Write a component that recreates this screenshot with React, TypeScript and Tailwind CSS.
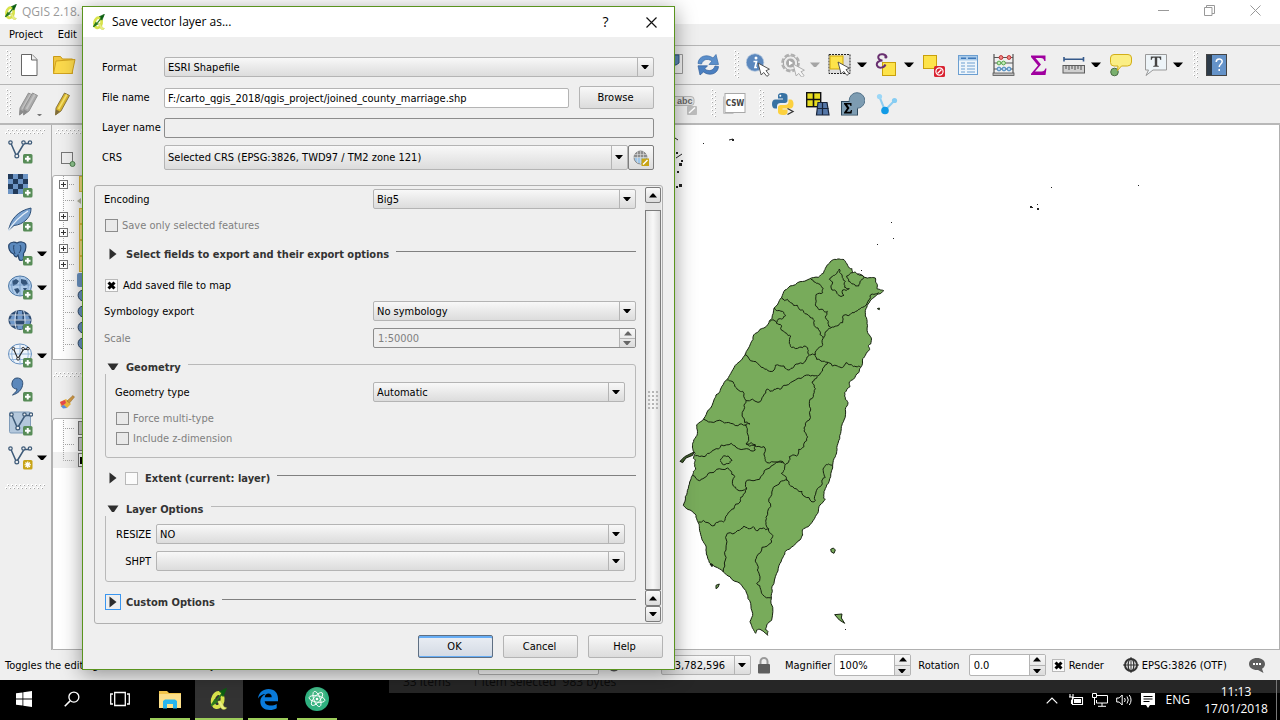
import type { ReactNode } from "react";

type Kids = { children?: ReactNode };

/* ---------- shared glyphs ---------- */

function Svg({ children, className = "h-6 w-6", box = "0 0 24 24" }: Kids & { className?: string; box?: string }) {
  return (
    <svg viewBox={box} className={`shrink-0 ${className}`} fill="none" aria-hidden="true">
      {children}
    </svg>
  );
}

function Down({ className = "text-black" }: { className?: string }) {
  return (
    <svg viewBox="0 0 10 6" className={`h-[6px] w-[10px] shrink-0 ${className}`} aria-hidden="true">
      <path d="M0 0.5h10L6 5H4z" fill="currentColor" />
    </svg>
  );
}

function SmallDown() {
  return (
    <svg viewBox="0 0 8 5" className="h-[5px] w-2" aria-hidden="true">
      <path d="M0 0h8L4.6 4h-1.2z" fill="#000" />
    </svg>
  );
}

function SmallUp({ color = "#000" }: { color?: string }) {
  return (
    <svg viewBox="0 0 8 5" className="h-[5px] w-2" aria-hidden="true">
      <path d="M0 4.5h8L4.6 0.5h-1.2z" fill={color} />
    </svg>
  );
}

function GripV({ className = "" }: { className?: string }) {
  const dots = [0, 1, 2, 3, 4, 5, 6];
  return (
    <svg viewBox="0 0 6 30" className={`h-[30px] w-[6px] shrink-0 ${className}`} aria-hidden="true">
      {dots.map((i) => (
        <g key={i}>
          <rect x="0" y={i * 4} width="2" height="2" fill="#fff" />
          <rect x="1" y={i * 4 + 1} width="1" height="1" fill="#a8a8a8" />
          <rect x="3" y={i * 4 + 2} width="2" height="2" fill="#fff" />
          <rect x="4" y={i * 4 + 3} width="1" height="1" fill="#a8a8a8" />
        </g>
      ))}
    </svg>
  );
}

function GripH({ count }: { count: number }) {
  return (
    <svg width={count * 4} height="6" className="shrink-0" aria-hidden="true">
      {Array.from({ length: count }, (_, i) => (
        <g key={i}>
          <rect x={i * 4} y="3" width="2" height="2" fill="#fff" />
          <rect x={i * 4 + 1} y="4" width="1" height="1" fill="#a8a8a8" />
          <rect x={i * 4 + 2} y="0" width="2" height="2" fill="#fff" />
          <rect x={i * 4 + 3} y="1" width="1" height="1" fill="#a8a8a8" />
        </g>
      ))}
    </svg>
  );
}

function PlusBadge() {
  return (
    <g>
      <rect x="15" y="15" width="9.5" height="9.5" rx="1.5" fill="#578c57" />
      <path d="M19.75 17v5.5M17 19.75h5.5" stroke="#fff" strokeWidth="2" />
    </g>
  );
}

function Cursor({ x, y, fill = "#fff", stroke = "#444" }: { x: number; y: number; fill?: string; stroke?: string }) {
  return (
    <path
      transform={`translate(${x} ${y})`}
      d="M0 0l3.2 12 2.5-2.6 3.2 4 2.2-1.8-3.1-3.9 3.4-1.5z"
      fill={fill}
      stroke={stroke}
      strokeWidth="0.9"
    />
  );
}

function QgisLogo({ className }: { className: string }) {
  return (
    <Svg className={className} box="0 0 16 20">
      <ellipse cx="6.800" cy="11" rx="4.400" ry="6.400" stroke="#d9e34c" strokeWidth="3.600" transform="rotate(12 7 11)" />
      <path d="M6.500 12l3.500 6.500c1.500 1.500 4 1.500 5-.5l-2.300-.8-3.200-5.700z" fill="#e9ee7d" stroke="#b9c535" strokeWidth="0.4" />
      <path d="M1 16l3.200-5 1.800 1.500zM6 11L13.500 2" fill="#2c7a1d" stroke="#2c7a1d" strokeWidth="1.6" />
      <path d="M14.8 0.3l-6.300 3 2 1 .2 2.400 1 1z" fill="#0c5f12" stroke="#0c5f12" strokeWidth="0.800" />
    </Svg>
  );
}

/* ---------- toolbar icons ---------- */

const NewFile = () => (
  <Svg>
    <path d="M4.500 1.500h10.500l5 5v16h-15.500z" fill="#fff" stroke="#666" />
    <path d="M14.500 1.500v5.500h5.500" fill="#eee" stroke="#666" />
  </Svg>
);
const Folder = () => (
  <Svg>
    <path d="M1.500 20.500v-17h7l2 2.500h10v14.500z" fill="#f0c63f" stroke="#c99a16" />
    <path d="M1.500 20.500l2.500-12.500 19-1.500-3 14z" fill="#fbd94c" stroke="#d1a31f" />
  </Svg>
);
const Refresh = () => (
  <Svg>
    <path d="M2 10.500C2.500 3 11 .5 17 5l3-3.500 2.500 10H13l3-3.500c-5-3-9-1.500-10.500 3z" fill="#5b8fcb" stroke="#3a6ba8" strokeWidth="0.7" />
    <path d="M22.500 13.500C22 21 13.500 23.500 7.500 19l-3.500 3L2 12.800h9.500l-3 3.200c5 3 9 1.500 10.500-3z" fill="#4a7fc0" stroke="#315d98" strokeWidth="0.7" />
  </Svg>
);
const Info = () => (
  <Svg>
    <circle cx="9" cy="9.500" r="8.800" fill="#5a87bd" stroke="#b7c9de" strokeWidth="0.8" />
    <circle cx="10" cy="5" r="1.500" fill="#fff" />
    <path d="M7.500 8.500h3l-1.500 6h2" stroke="#fff" strokeWidth="1.700" />
    <Cursor x={12} y={10} />
  </Svg>
);
const Gear = () => (
  <Svg>
    <circle cx="9.500" cy="10" r="8.400" stroke="#b0b0b0" strokeWidth="2" strokeDasharray="4.600 2" />
    <circle cx="9.500" cy="10" r="7.200" fill="#ececec" stroke="#a0a0a0" />
    <circle cx="9.500" cy="10" r="4.500" fill="#a9a9a9" />
    <path d="M8 7.500l4 2.500-4 2.500z" fill="#fff" />
    <Cursor x={12} y={11} fill="#f4f4f4" stroke="#a8a8a8" />
  </Svg>
);
const SelectArea = () => (
  <Svg>
    <rect x="1" y="1.500" width="21" height="19" fill="#dedede" stroke="#222" strokeDasharray="2 1" />
    <rect x="2" y="3" width="13" height="13" fill="#fde34a" stroke="#cfa70c" />
    <Cursor x={10} y={9} />
  </Svg>
);
const Epsilon = () => (
  <Svg>
    <rect x="7.500" y="9.500" width="13" height="13" fill="#fde34a" stroke="#c9a00c" />
    <path d="M11.500 4.500C11 1 5 0 3.500 3c-1 2.500 1.500 4.500 4 4.500C4 7.500 1 9.500 2 12.500c1.500 3.500 7 2.500 8.500-1" stroke="#693070" strokeWidth="2" />
    <circle cx="10.800" cy="4" r="1.500" fill="#693070" />
  </Svg>
);
const Deselect = () => (
  <Svg>
    <rect x="1.500" y="2.500" width="13" height="13" fill="#fde34a" stroke="#c9a00c" />
    <rect x="12" y="13" width="11" height="11" rx="1.500" fill="#d92231" />
    <circle cx="17.500" cy="18.500" r="3.600" stroke="#fff" strokeWidth="1.200" />
    <path d="M15.500 20.500l4-4" stroke="#fff" strokeWidth="1.200" />
  </Svg>
);
const AttrTable = () => (
  <Svg>
    <rect x="1.500" y="2.500" width="19" height="19" fill="#eef5fb" stroke="#6c9fd1" />
    <rect x="2" y="3" width="18" height="4.500" fill="#a9cbea" />
    <path d="M4 5.200h5M11 5.200h8" stroke="#3f78b8" strokeWidth="1.500" />
    <path d="M4 10h4M10 10h8M4 13h4M10 13h8M4 16h4M10 16h8M4 19h4M10 19h8" stroke="#6c9fd1" strokeWidth="1.200" />
  </Svg>
);
const Abacus = () => (
  <Svg>
    <path d="M2 1v20M21 1v20M2 4.500h19M2 10h19M2 16h19" stroke="#555" strokeWidth="1.200" />
    <rect x="1" y="20" width="21" height="2.500" fill="#bbb" stroke="#555" strokeWidth="0.800" />
    <g fill="#f28a8a" stroke="#c03434"><circle cx="9" cy="4.500" r="1.900" /><circle cx="17" cy="4.500" r="1.900" /></g>
    <g fill="#c5ebb9" stroke="#57a84e"><circle cx="7" cy="10" r="1.900" /><circle cx="11.500" cy="10" r="1.900" /></g>
    <g fill="#b3d4f3" stroke="#4485bd"><circle cx="7" cy="16" r="1.900" /><circle cx="12" cy="16" r="1.900" /><circle cx="17" cy="16" r="1.900" /></g>
  </Svg>
);
const Sigma = () => (
  <Svg>
    <path d="M4 2.500h14.500V8h-1.200c-.4-2-1.300-3-3.500-3H8.500l5.500 6.500L8 18.500h6.500c2.300 0 3.200-1 3.800-3h1.200L18.500 22H4v-1.300l7-8.200-7-8.500z" fill="#a0009f" />
  </Svg>
);
const Ruler = () => (
  <Svg>
    <path d="M2 4v4.500M21.500 4v4.500M2 6.200h19.500" stroke="#35598a" strokeWidth="1.600" />
    <rect x="1" y="12.500" width="21.500" height="7.500" fill="#cfcfcf" stroke="#5c5c5c" />
    <path d="M4 13v3M7 13v4M10 13v3M13 13v4M16 13v3M19 13v4" stroke="#444" strokeWidth="0.900" />
  </Svg>
);
const MapTip = () => (
  <Svg>
    <circle cx="5.500" cy="19" r="3.800" fill="#7ab06e" stroke="#4a6a45" />
    <path d="M5 1.500h14a3.500 3.500 0 013.500 3.500v4a4 4 0 01-4 4h-6l-4 4.500.5-4.500H5A3.500 3.500 0 011.500 9.500V5A3.500 3.500 0 015 1.500z" fill="#fbee84" stroke="#d2ae18" />
  </Svg>
);
const TextNote = () => (
  <Svg>
    <path d="M1.500 1.500h21v15.500H9L2 22.500 4.500 17h-3z" fill="#edf4f8" stroke="#999" />
    <path d="M6.800 3.500h10.400V7h-.8c-.3-1.600-.9-2.200-2.300-2.200h-.9v7.800l1.600.4v.8H9.200V13l1.600-.4V4.800h-.9C8.500 4.800 7.900 5.400 7.600 7h-.8z" fill="#444" />
  </Svg>
);
const HelpBook = () => (
  <Svg>
    <rect x="1.500" y="1.500" width="20" height="21" fill="#6593c9" stroke="#444" />
    <rect x="2" y="2" width="5" height="20" fill="#2d3b49" />
    <path d="M11.200 9c0-4 6-4 6-.5 0 2.500-3 2.500-3 5.500M14.200 16v2" stroke="#fff" strokeWidth="1.500" />
  </Svg>
);
function Pencil({ a, b, c, x = 0 }: { a: string; b: string; c: string; x?: number }) {
  return (
    <g transform={`translate(${x} 0)`}>
      <path d="M3 16L11.500 1l5 2.500L8 19 2.500 23z" fill={a} stroke={c} strokeWidth="0.900" />
      <path d="M5.500 17L13.800 2.500" stroke={b} strokeWidth="1.800" />
      <path d="M3 17.500l4 2-4.500 3.500z" fill={c} />
    </g>
  );
}
const PencilsGray = () => (
  <Svg>
    <Pencil a="#aaa" b="#c2c2c2" c="#8b8b8b" x={-1} />
    <Pencil a="#aaa" b="#c2c2c2" c="#8b8b8b" x={3} />
    <path d="M19 22h5l-2.500 2.500z" fill="#777" />
  </Svg>
);
const PencilYellow = () => (
  <Svg>
    <Pencil a="#d9b62e" b="#f5e06b" c="#806d3a" x={2} />
  </Svg>
);
const AbcLabel = () => (
  <Svg>
    <rect x="-4" y="4.500" width="23" height="9" rx="3" fill="#e2e2e2" stroke="#b5b5b5" />
    <text x="2" y="12" fontSize="9" fontWeight="700" fill="#666" fontFamily="Liberation Sans, sans-serif">abc</text>
    <rect x="12" y="14" width="10" height="9" rx="1" fill="#bdbdbd" />
    <path d="M14 21l6-5.500" stroke="#fff" strokeWidth="1.500" />
  </Svg>
);
const Csw = () => (
  <Svg>
    <path d="M.5 4.500v17h10" stroke="#c2c2c2" />
    <rect x="2" y="1.500" width="20" height="19" fill="#fff" stroke="#a8a8a8" />
    <text x="12" y="14" fontSize="8" textAnchor="middle" fontWeight="700" fill="#444" fontFamily="DejaVu Sans Condensed, DejaVu Sans, sans-serif">CSW</text>
  </Svg>
);
const Python = () => (
  <Svg>
    <path d="M11.500 1C7.500 1 7 2.500 7 4v2.500h5v1H4.500C2 7.500 1 9.500 1 12s1 4.500 3 4.500h2V14c0-2 1.500-3 3.500-3H14c1.500 0 2.500-1 2.500-2.500V4c0-2-2-3-5-3z" fill="#3872a3" />
    <circle cx="9.300" cy="3.800" r="1" fill="#fff" />
    <path d="M12 23c4 0 4.500-1.500 4.500-3v-2.500h-5v-1H19c2.500 0 3.500-2 3.500-4.500S21.500 7.500 19.500 7.500h-2V10c0 2-1.500 3-3.500 3H9.500C8 13 7 14 7 15.500V20c0 2 2 3 5 3z" fill="#fcd13f" />
    <path d="M16.500 16.500l5.500 3-5.500 3" stroke="#333" strokeWidth="1.300" />
  </Svg>
);
const Tiles = () => (
  <Svg>
    <rect x=".7" y=".7" width="14" height="14" fill="#e6dc1f" stroke="#111" strokeWidth="1.400" />
    <path d="M7.500 1v13M1 7.500h13" stroke="#111" strokeWidth="1.600" />
    <path d="M12 10.500h9l2 12.500H10.500z" fill="#5577a8" stroke="#18243a" strokeWidth="1.200" />
    <path d="M16.500 10.500V23M11 16.500h11.500" stroke="#18243a" strokeWidth="1.200" />
  </Svg>
);
const SigmaBubble = () => (
  <Svg>
    <rect x=".5" y="9.500" width="16" height="13.500" fill="#7d9cb2" stroke="#2f485c" />
    <circle cx="16" cy="8.500" r="7.800" fill="#7d9cb2" stroke="#54738a" />
    <rect x="1" y="10" width="15" height="12.500" fill="#7d9cb2" />
    <path d="M3 11h7.500v3h-1l-.6-1.400H6L8.500 16 5.800 19.800h3.400l.8-1.800h1l-.4 3.500H3v-1L6 16.200 3 12z" fill="#000" />
  </Svg>
);
const BlueNodes = () => (
  <Svg>
    <path d="M3.500 5L9 18.500 18 9" stroke="#8fcdf0" strokeWidth="2" />
    <circle cx="3.500" cy="4.500" r="2.600" fill="#9bd7f7" />
    <circle cx="18.500" cy="8.500" r="2.600" fill="#86cdf3" />
    <circle cx="9" cy="18.500" r="3.800" fill="#129be6" />
  </Svg>
);
const PanelPeek = () => (
  <Svg>
    <path d="M0 1.500h7.500v19H0" fill="#f2f2f2" stroke="#999" />
    <path d="M-1 2h5v8l-3 2h-2z" fill="#5d87b8" stroke="#2f567f" />
  </Svg>
);

/* ---------- left tool column icons ---------- */

const VNodes = ({ dark = "#3d5a78" }: { dark?: string }) => (
  <g stroke={dark} strokeWidth="1.500">
    <path d="M3 4.500L8.500 17 16 4.500h5" />
    <g fill="#efefef" strokeWidth="1.200">
      <circle cx="2.500" cy="3.500" r="1.700" /><circle cx="8.800" cy="17" r="1.900" /><circle cx="15.500" cy="3.500" r="1.700" /><circle cx="22" cy="3.500" r="1.700" />
    </g>
  </g>
);
const AddVector = () => <Svg className="h-[25px] w-[25px]" box="0 0 25 25"><VNodes /><PlusBadge /></Svg>;
const AddRaster = () => (
  <Svg className="h-[25px] w-[25px]" box="0 0 25 25">
    <rect y="1" width="20" height="20" fill="#6c94c4" />
    <path d="M0 1h5v5H0zM10 1h5v5h-5zM5 6h5v5H5zM15 6h5v5h-5zM0 11h5v5H0zM10 11h5v5h-5zM5 16h5v5H5z" fill="#213a5a" />
    <PlusBadge />
  </Svg>
);
const AddSpatialite = () => (
  <Svg className="h-[25px] w-[25px]" box="0 0 25 25">
    <path d="M.5 23.500C2.500 13 9 4 23 1c0 6-2 9-5 12-3 3-7 5-12 5.500z" fill="#7ba3d0" stroke="#2c4f78" />
    <path d="M0 24C6 15 12 9 20 4" stroke="#e4eef8" strokeWidth="1.300" />
    <PlusBadge />
  </Svg>
);
const AddPostgis = () => (
  <Svg className="h-[25px] w-[25px]" box="0 0 25 25">
    <path d="M1 3.500C3 .5 7 1 9 2c3-1.500 7-1.500 8.500 1 1 4 0 7-2 9.500V18c-1 2-4 2-4.500 0l-1-4-1.500 2c-2 0-2.500-2-3-3C2 12 0 7 1 3.500z" fill="#5b89bd" stroke="#26456c" strokeWidth="1.200" />
    <path d="M6 4c-1 3 0 6 1 9M12 4c1.500 2 1 6-1 8" stroke="#26456c" />
    <PlusBadge />
  </Svg>
);
const AddWms = () => (
  <Svg className="h-[25px] w-[25px]" box="0 0 25 25">
    <ellipse cx="12" cy="11" rx="11.500" ry="10" fill="#aecbea" stroke="#4f79a6" />
    <path d="M4 6l4-2 3 2-2 3-4 2zM13 4l5 1 2 4-4 2-3-3zM6 14l4-1 2 3-3 3zM15 13l4 0-2 4z" fill="#34557b" />
    <path d="M2 10h20M12 1v20M6 3c-3 5-3 11 0 16M18 3c3 5 3 11 0 16" stroke="#6a93c0" strokeWidth="0.700" />
    <PlusBadge />
  </Svg>
);
const AddWcs = () => (
  <Svg className="h-[25px] w-[25px]" box="0 0 25 25">
    <ellipse cx="12" cy="11" rx="11.500" ry="10" fill="#2c4a70" />
    <path d="M9.500 6.500h5v4h-5zM1.500 11.500H7v4H3zM17 11.500h5.500l-1 4H17zM9.500 16.500h5V20h-5zM4 6.500h4v4H2zM16 6.500h4l2 4h-6zM10 2h4v3.500h-4z" fill="#6f98c9" />
    <path d="M2 6h20M1 11h22M2 16h20M8.500 1.500c-2 6-2 13 0 19M15.500 1.500c2 6 2 13 0 19" stroke="#dfe9f4" strokeWidth="0.900" />
    <PlusBadge />
  </Svg>
);
const AddWfs = () => (
  <Svg className="h-[25px] w-[25px]" box="0 0 25 25">
    <ellipse cx="12" cy="11" rx="11.500" ry="10" fill="#edf4fb" stroke="#6690bf" />
    <path d="M1 11h22M12 1v20M6 3c-3 5-3 11 0 16M18 3c3 5 3 11 0 16M3 5.500h18M3 16.500h18" stroke="#8eb1d8" strokeWidth="0.900" />
    <g transform="translate(3.500 3) scale(.75)"><VNodes dark="#222" /></g>
    <PlusBadge />
  </Svg>
);
const AddCsv = () => (
  <Svg className="h-[25px] w-[25px]" box="0 0 25 25">
    <path d="M9 1c4.500 0 6.500 3 5.500 7.500C13.500 13 10 16.500 4.500 18c3-2.500 4.500-4.500 4.500-6C5 12 3.500 9 4 6c.4-3 2.500-5 5-5z" fill="#5c88bb" stroke="#2c4c72" />
    <PlusBadge />
  </Svg>
);
const AddVirtual = () => (
  <Svg className="h-[25px] w-[25px]" box="0 0 25 25">
    <rect x="1.500" y="1" width="21" height="21" rx="1.500" fill="#b4c8dc" stroke="#7f9bb8" />
    <g transform="translate(1 0)"><VNodes /></g>
    <PlusBadge />
  </Svg>
);
const NewVector = () => (
  <Svg className="h-[25px] w-[25px]" box="0 0 25 25">
    <VNodes />
    <rect x="15" y="15" width="9.500" height="9.500" rx="1.500" fill="#c8a416" />
    <path d="M19.750 16.500v6.500M16.500 19.750h6.500M17.500 17.500l4.500 4.500M22 17.500l-4.500 4.500" stroke="#fff" strokeWidth="1.200" />
  </Svg>
);

/* ---------- controls ---------- */

const face = "rounded-[2px] border border-[#b4b4b4] bg-linear-to-b from-[#f8f8f8] to-[#dcdcdc]";

function Combo({ id, value, className = "h-5 w-full" }: { id: string; value: string; className?: string }) {
  return (
    <div className={`relative flex ${className}`}>
      <select id={id} aria-label={id} defaultValue={value} className={`h-full w-full appearance-none pt-px pr-5 pl-[3px] leading-[14px] text-black outline-none ${face}`}>
        <option value={value}>{value}</option>
      </select>
      <span className="pointer-events-none absolute inset-y-px right-px flex w-4 items-center justify-center border-l border-[#b4b4b4] pr-px">
        <SmallDown />
      </span>
    </div>
  );
}

function Spin({ id, value, disabled, className }: { id: string; value: string; disabled?: boolean; className: string }) {
  const ink = disabled ? "#666" : "#000";
  const box = disabled ? "border-[#8c8c8c] bg-[#efefef] text-[#808080]" : "border-[#b4b4b4] bg-white text-black";
  return (
    <div className={`flex overflow-hidden rounded-[2px] border ${box} ${className}`}>
      <input id={id} defaultValue={value} disabled={disabled} className="min-w-0 flex-1 bg-transparent pt-px pl-1 outline-none" />
      <div className="flex w-4 flex-col border-l border-[#b4b4b4] bg-linear-to-b from-[#f8f8f8] to-[#dcdcdc]">
        <button aria-label={`${id} up`} disabled={disabled} className="flex flex-1 items-center justify-center border-b border-[#b4b4b4]">
          <SmallUp color={ink} />
        </button>
        <button aria-label={`${id} down`} disabled={disabled} className="flex flex-1 rotate-180 items-center justify-center">
          <SmallUp color={ink} />
        </button>
      </div>
    </div>
  );
}

function Check({ label, checked, disabled, gap = "gap-1" }: { label?: string; checked?: boolean; disabled?: boolean; gap?: string }) {
  const edge = disabled ? "border-[#8c8c8c] bg-[#e9e9e9]" : "border-[#b9b9b9] bg-[#fbfbfb]";
  return (
    <label className={`flex h-[14px] items-center ${gap} ${disabled ? "text-[#808080]" : "text-black"}`}>
      <span className="relative flex h-[13px] w-[13px] shrink-0">
        <input type="checkbox" aria-label={label ?? "Extent"} defaultChecked={checked} disabled={disabled} className={`h-full w-full appearance-none border ${edge}`} />
        {checked && (
          <svg viewBox="0 0 13 13" className="pointer-events-none absolute inset-0 h-full w-full" aria-hidden="true">
            <path d="M3.500 3.500l6 6M9.500 3.500l-6 6" stroke="#000" strokeWidth="3" />
          </svg>
        )}
      </span>
      {label && <span className="pt-px">{label}</span>}
    </label>
  );
}

function Push({ children, primary }: Kids & { primary?: boolean }) {
  const look = primary
    ? "rounded-[2px] border border-[#5f6f82] bg-linear-to-b from-[#eaeef4] to-[#d3dae4] shadow-[inset_0_2px_0_#66adf5,inset_0_-1px_0_#66adf5]"
    : face;
  return <button className={`h-[23px] w-[75px] shrink-0 pt-px pr-[2px] leading-[14px] ${look}`}>{children}</button>;
}

function TriRight() {
  return <svg viewBox="0 0 8 12" className="h-3 w-2" aria-hidden="true"><path d="M.5.500L7.500 6l-7 5.500z" fill="#2e2e2e" /></svg>;
}
function TriDown() {
  return <svg viewBox="0 0 12 8" className="h-2 w-3" aria-hidden="true"><path d="M.500.5h11L7 7H5z" fill="#2e2e2e" /></svg>;
}

function Collapsed({ title, check, focus, className }: { title: string; check?: boolean; focus?: boolean; className: string }) {
  return (
    <div className={`flex h-4 items-center ${className}`}>
      <button aria-label={`Expand ${title}`} className={`flex h-4 w-4 items-center justify-center border ${focus ? "border-[#3a96f0]" : "border-transparent"}`}>
        <TriRight />
      </button>
      {check && <span className="ml-1 flex"><Check /></span>}
      <h3 className={`pt-[2px] font-bold text-[#333] ${check ? "ml-[7px]" : "ml-[5px]"}`}>{title}</h3>
      <span className="mb-[6px] ml-[7px] h-px flex-1 bg-[#808080]" />
    </div>
  );
}

function Group({ title, className, children }: Kids & { title: string; className: string }) {
  return (
    <fieldset className={`min-w-0 rounded-[3px] border border-[#b9b9b9] px-[10px] ${className}`}>
      <legend className="-ml-[11px] flex h-5 items-center bg-[#efefef] pt-[6px] pr-[7px] font-bold text-[#333]">
        <button aria-label={`Collapse ${title}`} className="mr-[5px] flex h-[14px] w-4 items-center justify-center">
          <TriDown />
        </button>
        <span className="pt-px">{title}</span>
      </legend>
      {children}
    </fieldset>
  );
}

/* ---------- dialog ---------- */

function ScrollBar() {
  const btn = "flex h-4 items-center justify-center rounded-[2px] border border-[#7c7c7c] bg-linear-to-b from-[#fafafa] to-[#dcdcdc]";
  return (
    <div className="flex w-4 flex-col bg-[#e4e4e4]">
      <button aria-label="Scroll up" className={btn}><SmallUp /></button>
      <div className="mt-[7px] flex flex-1 flex-col items-center justify-center border border-[#7c7c7c] bg-linear-to-r from-[#e4e4e4] via-[#f8f8f8] to-[#dcdcdc]">
        <svg width="11" height="19" aria-hidden="true">
          {[0, 4, 8, 12, 16].map((y) => [0, 4, 8].map((x) => <rect key={`${x}-${y}`} x={x} y={y} width="2" height="2" fill="#b5b5b5" />))}
        </svg>
      </div>
      <button aria-label="Page up" className={btn}><SmallUp /></button>
      <button aria-label="Scroll down" className={btn}><SmallDown /></button>
    </div>
  );
}

function Dialog() {
  return (
    <section role="dialog" aria-label="Save vector layer as" className="absolute top-[6px] left-[82px] z-20 flex w-[593px] flex-col border border-[#5a941e] bg-[#efefef] shadow-[0_4px_20px_rgba(0,0,0,0.4)]">
      <header className="flex h-[30px] items-center bg-white pl-[9px] font-['Open_Sans','Noto_Sans',sans-serif] text-[12px]">
        <QgisLogo className="h-4 w-[14px]" />
        <h2 className="ml-[6px] flex-1">Save vector layer as...</h2>
        <button aria-label="Help" className="w-[45px] text-[14px]">?</button>
        <button aria-label="Close" className="flex w-[46px] justify-center">
          <svg viewBox="0 0 11 11" className="h-[11px] w-[11px]" aria-hidden="true"><path d="M.5.500l10 10M10.500.500l-10 10" stroke="#111" strokeWidth="1.200" /></svg>
        </button>
      </header>

      <div className="grid grid-cols-[62px_1fr] items-center gap-y-[7px] pt-5 pr-5 pl-[19px]">
        <label htmlFor="Format" className="pt-px">Format</label>
        <Combo id="Format" value="ESRI Shapefile" />
        <label htmlFor="file" className="pt-[2px]">File name</label>
        <div className="flex items-center gap-[10px] pt-[2px]">
          <input id="file" defaultValue="F:/carto_qgis_2018/qgis_project/joined_county_marriage.shp" className="h-5 min-w-0 flex-1 rounded-[2px] border border-[#b4b4b4] bg-white pt-px pl-[3px] outline-none" />
          <Push>Browse</Push>
        </div>
        <label htmlFor="layer" className="pt-[2px]">Layer name</label>
        <input id="layer" disabled className="mt-[2px] h-5 w-full rounded-[2px] border border-[#8c8c8c] bg-[#efefef]" />
        <label htmlFor="CRS" className="pt-px">CRS</label>
        <div className="flex">
          <Combo id="CRS" value="Selected CRS (EPSG:3826, TWD97 / TM2 zone 121)" className="h-[25px] flex-1" />
          <button aria-label="Select CRS" className="flex h-[25px] w-[26px] items-center justify-center rounded-[2px] border border-[#7c7c7c] bg-linear-to-b from-[#fafafa] to-[#dcdcdc]">
            <Svg className="h-4 w-4" box="0 0 16 16">
              <circle cx="7.500" cy="7.500" r="6.500" fill="#9fc6e8" stroke="#8d8d8d" />
              <path d="M1 7.500A6.500 6.500 0 0114 7.500z" fill="#8d8d8d" />
              <path d="M1 4.500h13M0 7.500h15M4.500 1v12M7.500 1v13M10.500 1v12" stroke="#ddd" strokeWidth="0.600" />
              <rect x="8.500" y="8.500" width="7.500" height="7.500" fill="#c8a416" />
              <path d="M10 14.500l4.500-4.500" stroke="#fff" strokeWidth="1.500" />
            </Svg>
          </button>
        </div>
      </div>

      <div className="mx-[11px] mt-[15px] flex rounded-[3px] border border-[#b0b0b0] py-px pr-px">
        <div className="flex min-w-0 flex-1 flex-col pt-[2px] pr-[9px] pb-3 pl-[10px]">
          <div className="grid grid-cols-[268px_1fr] items-center">
            <label htmlFor="Encoding" className="-ml-px pt-px">Encoding</label>
            <Combo id="Encoding" value="Big5" />
          </div>
          <div className="mt-[9px]"><Check label="Save only selected features" disabled /></div>
          <Collapsed title="Select fields to export and their export options" className="mt-[14px]" />
          <div className="mt-4"><Check label="Add saved file to map" checked gap="gap-[5px]" /></div>
          <div className="mt-[9px] grid grid-cols-[268px_1fr] items-center gap-y-[7px]">
            <label htmlFor="Symbology" className="-ml-px pt-px">Symbology export</label>
            <Combo id="Symbology" value="No symbology" />
            <label htmlFor="Scale" className="-ml-px pt-px text-[#808080]">Scale</label>
            <Spin id="Scale" value="1:50000" disabled className="h-5 w-full" />
          </div>
          <Group title="Geometry" className="mt-[6px] pb-3">
            <div className="mt-2 grid grid-cols-[257px_1fr] items-center">
              <label htmlFor="Geometry" className="-ml-px pt-px">Geometry type</label>
              <Combo id="Geometry" value="Automatic" />
            </div>
            <div className="mt-[9px] flex flex-col gap-[6px]">
              <Check label="Force multi-type" disabled />
              <Check label="Include z-dimension" disabled />
            </div>
          </Group>
          <Collapsed title="Extent (current: layer)" check className="mt-3" />
          <Group title="Layer Options" className="mt-[10px] pb-[10px]">
            <div className="mt-2 grid grid-cols-[35px_1fr] items-center gap-x-[5px] gap-y-[7px] text-right">
              <label htmlFor="RESIZE" className="pt-px">RESIZE</label>
              <Combo id="RESIZE" value="NO" />
              <label htmlFor="SHPT" className="pt-px">SHPT</label>
              <Combo id="SHPT" value="" />
            </div>
          </Group>
          <Collapsed title="Custom Options" focus className="mt-3" />
        </div>
        <ScrollBar />
      </div>

      <footer className="flex justify-end gap-[10px] px-[11px] pt-[11px] pb-[11px]">
        <Push primary>OK</Push>
        <Push>Cancel</Push>
        <Push>Help</Push>
      </footer>
    </section>
  );
}

/* ---------- map ---------- */

const coast =
  "M598 57L612 59 618 68 628 84 636 86 638 98 646 96 652 102 664 106 674 112 690 113 706 114 707 126 710 130 711 146 722 150 731 152 716 162 702 172 688 188 678 206 676 228 681 250 683 278 693 292 692 312 684 318 689 328 676 346 668 356 662 382 656 398 640 418 628 426 630 440 614 458 616 478 624 488 616 508 612 540 604 560 602 580 594 610 590 635 586 650 578 675 572 710 560 735 552 755 551 775 556 778 540 795 535 815 524 835 505 860 487 870 488 885 480 900 460 918 436 934 430 950 420 970 410 1000 396 1040 395 1060 393 1090 395 1140 380 1155 376 1168 384 1175 383 1186 372 1176 360 1168 350 1170 347 1180 340 1168 336 1160 330 1145 338 1120 332 1090 320 1060 300 1030 270 1010 250 996 225 980 208 968 199 942 198 918 190 905 182 884 178 860 174 846 168 826 150 810 130 796 136 770 145 745 152 720 158 705 160 695 167 688 163 670 166 660 160 655 165 640 158 625 158 610 168 590 172 570 170 555 192 535 205 510 222 480 228 465 240 455 245 440 262 418 275 395 290 372 316 344 332 310 341 285 360 268 375 262 388 243 396 235 402 205 418 182 425 172 435 150 450 138 480 125 508 117 535 112 550 100 556 85 568 70 580 59 598 57";

const borders = [
  "M513 118L530 130 542 136 550 146 548 158 528 164 527 190 534 206 546 208 552 214 562 214 556 232 564 250 573 263",
  "M424 173L434 182 442 178 452 188 472 196 478 208 490 212 505 226 518 234 522 252 534 264 540 284 548 292 555 286 564 268 573 263",
  "M573 263L590 258 608 248 610 226 636 218 656 208 668 202 684 184 690 168 706 162 716 158",
  "M402 205L412 212 432 218 436 228 428 236 414 238 410 250 402 240 390 244",
  "M410 250L424 256 422 266 440 280 452 288 448 310 454 322 478 322 496 318 505 332 508 345 526 343 538 322 548 314 552 292",
  "M314 343L340 364 364 382 384 392 402 390 406 376 432 378 440 388 458 384 474 372 498 360 506 346",
  "M526 343L530 358 548 364 566 368 592 378 608 382 618 368 634 374 648 380 662 382",
  "M564 366L548 386 532 408 512 408 488 412 466 420 438 436 420 448 402 448 390 454 380 448 370 468 354 487 318 482",
  "M262 420L276 424 284 438 296 450 308 454 318 482 318 488 312 508 314 548 330 552 316 556 322 566 318 612 342 616",
  "M190 537L212 546 248 545 272 550 300 552 320 556",
  "M532 410L516 426 526 446 520 470 508 490 512 510 508 540 492 564 498 580 500 602 492 620 476 628 470 648 448 650 446 666 436 674",
  "M166 647L192 650 208 640 222 630 244 615 274 610 288 622 320 626 346 630 346 614 320 612",
  "M342 616L372 620 374 650 376 662 402 666 426 664 436 674",
  "M436 674L434 688 424 700 438 710 444 722 452 738 474 752 486 754 492 768 516 786 526 782 528 756 540 740 546 720 556 712 550 696 554 680 566 672 576 676",
  "M240 660L248 650 264 648 276 662 268 670 250 674 240 662",
  "M158 706L178 722 192 714 210 698 230 688 262 684 272 692 284 710 280 738 290 748 320 744 318 724 342 722 368 704 384 686 404 672 428 668",
  "M320 744L314 760 302 772 300 786 282 806 262 824 250 846 238 844 224 856 204 848 176 846",
  "M442 720L420 726 400 742 392 770 392 800 378 832 378 848 386 866 392 880 398 890 394 908 366 922 350 950 350 970 352 990 360 1010 350 1030 362 1048 368 1064 394 1074",
  "M250 996L256 960 258 930 262 880 292 872 312 858 324 866 340 860 354 872 370 864 386 868",
  "M568 118L576 110 586 104 598 87 606 104 610 120 616 124 614 142 628 146 608 150 612 166 600 168 590 156 576 150 578 126 568 118",
  "M638 98L620 108 626 124 640 132 656 138 662 122 672 112 652 102",
];

/* Splits each segment twice and nudges the new points sideways, for a natural shoreline. */
function roughen(d: string, amount: number) {
  let seed = 7;
  const rand = () => {
    seed = (seed * 1103515245 + 12345) % 2147483648;
    return seed / 2147483648 - 0.5;
  };
  const nums = (d.match(/\d+/g) ?? []).map(Number);
  let pts: [number, number][] = [];
  for (let i = 0; i < nums.length; i += 2) pts.push([nums[i], nums[i + 1]]);
  for (let pass = 0; pass < 2; pass++) {
    const next: [number, number][] = [pts[0]];
    for (let i = 1; i < pts.length; i++) {
      const [x0, y0] = pts[i - 1];
      const [x1, y1] = pts[i];
      const k = rand() * amount;
      next.push([(x0 + x1) / 2 - (y1 - y0) * k, (y0 + y1) / 2 + (x1 - x0) * k], [x1, y1]);
    }
    pts = next;
  }
  return "M" + pts.map(([x, y]) => `${x.toFixed(1)} ${y.toFixed(1)}`).join("L");
}

const coastPath = roughen(coast, 0.22);
const borderPaths = borders.map((d) => roughen(d, 0.4));

const islets: [number, number, number][] = [
  [732, 139, 2], [703, 143, 1], [676, 152, 2], [681, 160, 2], [679, 163, 3], [677, 171, 2], [679, 184, 3], [676, 186, 2],
  [1051, 187, 1], [1138, 185, 1], [1030, 206, 2], [1032, 207, 1], [1037, 204, 1], [1037, 208, 2], [891, 222, 1], [893, 238, 1], [877, 244, 1], [861, 270, 1],
  [845, 629, 1],
];

function TaiwanMap() {
  return (
    <svg viewBox="660 125 619 523" width="619" height="523" className="shrink-0" role="img" aria-label="Taiwan county map">
      <g transform="translate(640 240) scale(0.33333)" stroke="#16200f" strokeWidth="3" strokeLinejoin="round">
        <path d={coastPath} fill="#78ab5b" />
        {borderPaths.map((d) => <path key={d} d={d} fill="none" />)}
        <path d="M120 664l14-14 28-14-4 10-20 8-10 14z" fill="#44632f" />
        <path d="M572 928l8-4 6 6-4 10-8-4zM228 1036l10-4-4 10-6 4zM584 1124l22-2-2 12 10 16-16-10zM712 206l6-2 0 5z" fill="#78ab5b" />
        <path d="M210 972l8 2-2 6z" fill="#111" />
      </g>
      {islets.map(([x, y, s]) => <rect key={`${x}-${y}`} x={x} y={y} width={s} height={s} fill="#222" />)}
      <path d="M675 138l3 2M676 158l6-4M729 140l4-1" stroke="#222" />
    </svg>
  );
}

/* ---------- main window ---------- */

function Tool({ label, children, drop, faded }: Kids & { label: string; drop?: boolean; faded?: boolean }) {
  return (
    <button aria-label={label} className={`flex shrink-0 items-center gap-[5px] ${drop ? "w-9" : "w-6"}`}>
      {children}
      {drop && <Down className={faded ? "text-[#a5a5a5]" : "text-black"} />}
    </button>
  );
}

function SideTool({ label, drop, children }: Kids & { label: string; drop?: boolean }) {
  return (
    <button aria-label={label} className="flex h-[25px] w-full items-center gap-1">
      {children}
      {drop && <Down />}
    </button>
  );
}

type Node = { plus: boolean; tag: string };
const tree: Node[] = [
  { plus: true, tag: "folder" }, { plus: false, tag: "star" }, { plus: true, tag: "folder" }, { plus: true, tag: "folder" },
  { plus: true, tag: "folder" }, { plus: true, tag: "folder" }, { plus: false, tag: "blue" }, { plus: false, tag: "navy" },
  { plus: false, tag: "navy" }, { plus: false, tag: "navy" }, { plus: false, tag: "navy" },
];

function TreeRow({ plus, tag }: Node) {
  return (
    <li className="flex h-4 items-center">
      <svg width="30" height="16" aria-hidden="true">
        <path d="M10.500 0v16M12 8.500h9" stroke="#a5a5a5" strokeDasharray="1 1" />
        {plus && (
          <g stroke="#777">
            <rect x="6.500" y="4.500" width="8" height="8" fill="#fff" />
            <path d="M8 8.500h5M10.500 6v5" stroke="#333" />
          </g>
        )}
        {tag === "folder" && <rect x="26.500" y=".5" width="6" height="15" fill="#f7dd83" stroke="#e0b93e" />}
        {tag === "star" && <path d="M24 9l4-3v6z" fill="#b5b5a0" />}
        {tag === "blue" && <rect x="24" y="1" width="8" height="14" rx="2" fill="#6c94c4" />}
        {tag === "navy" && <path d="M30 2c-7 1-6 10 0 11z" fill="#6c94c4" stroke="#2d4868" />}
      </svg>
    </li>
  );
}

function MainWindow() {
  return (
    <div className="relative z-10 flex min-h-0 flex-1 flex-col bg-[#efefef]">
      <header className="flex h-6 shrink-0 items-center bg-white pr-[2px] pl-1 font-['Open_Sans','Noto_Sans',sans-serif] text-[12px] text-[#999]">
        <QgisLogo className="h-4 w-[14px]" />
        <h1 className="ml-1 flex-1">QGIS 2.18.1</h1>
        <div className="flex items-center">
          {["M0 5.500h11", "M.500 2.500h7.500v8H.500zM2.500 2.500V.500h8v8H8", "M.500.500l10 10M10.500.500l-10 10"].map((d) => (
            <button key={d} aria-label="Window control" className="flex w-[46px] justify-center">
              <svg viewBox="0 0 11 11" className="mb-1 h-[11px] w-[11px]" fill="none" stroke="#999" aria-hidden="true"><path d={d} /></svg>
            </button>
          ))}
        </div>
      </header>
      <nav className="flex h-[22px] shrink-0 items-center gap-[15px] border-b border-[#b5b5b5] pt-px pl-[9px]">
        <button>Project</button>
        <button>Edit</button>
      </nav>

      <div className="flex h-[39px] shrink-0 items-center border-b border-[#b5b5b5]">
        <div className="flex w-[675px] shrink-0 items-center pl-[6px]">
          <GripV />
          <span className="ml-[5px] flex gap-[11px]">
            <Tool label="New"><NewFile /></Tool>
            <Tool label="Open"><Folder /></Tool>
          </span>
        </div>
        <div className="flex shrink-0 items-center gap-[11px]">
          <span className="flex w-[10px] overflow-hidden"><PanelPeek /></span>
          <Tool label="Refresh"><Refresh /></Tool>
          <GripV className="ml-[3px]" />
        </div>
        <div className="ml-[6px] flex shrink-0 items-center gap-[11px]">
          <Tool label="Identify"><Info /></Tool>
          <Tool label="Run action" drop faded><Gear /></Tool>
          <Tool label="Select" drop><SelectArea /></Tool>
          <Tool label="Select by expression" drop><Epsilon /></Tool>
          <Tool label="Deselect"><Deselect /></Tool>
          <Tool label="Attribute table"><AttrTable /></Tool>
          <Tool label="Field calculator"><Abacus /></Tool>
          <Tool label="Statistics"><Sigma /></Tool>
          <Tool label="Measure" drop><Ruler /></Tool>
          <Tool label="Map tips"><MapTip /></Tool>
          <Tool label="Annotation" drop><TextNote /></Tool>
        </div>
        <GripV className="mr-[6px] ml-[13px]" />
        <Tool label="Help contents"><HelpBook /></Tool>
      </div>

      <div className="flex h-[38px] shrink-0 items-center">
        <div className="flex w-[675px] shrink-0 items-center pl-[6px]">
          <GripV />
          <span className="ml-[6px] flex gap-[9px]">
            <Tool label="Current edits"><PencilsGray /></Tool>
            <Tool label="Toggle editing"><PencilYellow /></Tool>
          </span>
        </div>
        <Tool label="Label"><AbcLabel /></Tool>
        <GripV className="mr-[6px] ml-3" />
        <Tool label="Metadata search"><Csw /></Tool>
        <GripV className="mr-[6px] ml-3" />
        <div className="flex gap-[11px]">
          <Tool label="Python console"><Python /></Tool>
          <Tool label="Raster tiles"><Tiles /></Tool>
          <Tool label="Group statistics"><SigmaBubble /></Tool>
          <Tool label="Topology"><BlueNodes /></Tool>
        </div>
      </div>

      <div className="flex min-h-0 flex-1 border-t-2 border-[#b8b8b8]">
        <aside className="flex w-[52px] shrink-0 flex-col border-r border-[#b0b0b0] pt-1">
          <span className="flex pl-[5px]"><GripH count={10} /></span>
          <div className="mt-1 flex flex-col gap-[9px] pl-2">
            <SideTool label="Add vector layer"><AddVector /></SideTool>
            <SideTool label="Add raster layer"><AddRaster /></SideTool>
            <SideTool label="Add SpatiaLite layer"><AddSpatialite /></SideTool>
            <SideTool label="Add PostGIS layer" drop><AddPostgis /></SideTool>
            <SideTool label="Add WMS layer" drop><AddWms /></SideTool>
            <SideTool label="Add WCS layer"><AddWcs /></SideTool>
            <SideTool label="Add WFS layer" drop><AddWfs /></SideTool>
            <SideTool label="Add delimited text"><AddCsv /></SideTool>
            <SideTool label="Add virtual layer"><AddVirtual /></SideTool>
            <SideTool label="New vector layer" drop><NewVector /></SideTool>
          </div>
          <span className="mt-[14px] flex pl-[5px]"><GripH count={10} /></span>
        </aside>

        <div className="flex w-[300px] shrink-0 flex-col">
          <span className="flex pt-1 pl-[3px]"><GripH count={60} /></span>
          <Svg className="mt-4 ml-2 h-4 w-4" box="0 0 16 16">
            <rect x="1.500" y="1.500" width="11" height="11" stroke="#777" />
            <circle cx="12.500" cy="13" r="2.500" fill="#8cc18c" stroke="#4f7f4f" />
          </Svg>
          <ul className="mt-2 h-[185px] overflow-hidden rounded-tl-[3px] border border-[#b0b0b0] bg-white">
            {tree.map((n, i) => <TreeRow key={i} {...n} />)}
          </ul>
          <span className="mt-3 flex pl-px"><GripH count={60} /></span>
          <Svg className="mt-4 ml-[7px] h-4 w-4" box="0 0 16 16">
            <path d="M1 8l6-3 5 5-4 4-6-1z" fill="#f0b93c" />
            <path d="M1 8l5-2 1 3-4 3z" fill="#e5484d" />
            <path d="M2 12l3-1 3 3-4 .5z" fill="#5b8fe0" />
            <path d="M8 7l6-5.500 1.500 1.500L10.500 9z" fill="#d29a45" stroke="#9b6b22" strokeWidth="0.500" />
          </Svg>
          <ul className="mt-2 flex-1 overflow-hidden rounded-tl-[3px] border border-[#b0b0b0] bg-white pt-px">
            {[0, 1, 2].map((i) => (
              <li key={i} className={`h-4 ${i === 2 ? "bg-[#f0f0f0]" : ""}`}>
                <svg width="30" height="16" aria-hidden="true">
                  <path d={i === 2 ? "M10.500 0v8.500h10" : "M10.500 0v16M12 8.500h9"} stroke="#a5a5a5" strokeDasharray="1 1" fill="none" />
                  <rect x="25.500" y="1.500" width="8" height="13" fill={i === 2 ? "#fff" : "#ccc"} stroke="#777" />
                  {i === 2 && <path d="M27 5h3v7h-3z" fill="#000" />}
                </svg>
              </li>
            ))}
          </ul>
        </div>

        <main className="flex min-w-0 flex-1 overflow-hidden border-r border-b border-[#b0b0b0] bg-white pl-[308px]">
          <TaiwanMap />
        </main>
      </div>

      <footer className="flex h-[30px] shrink-0 items-center pl-[5px]">
        <span className="w-[473px] shrink-0 pt-px">Toggles the editing state of the current layer</span>
        <span className="h-[19px] w-[121px] shrink-0 rounded-[2px] border border-[#b4b4b4] bg-white" />
        <svg viewBox="0 0 14 14" className="ml-2 h-[14px] w-[14px] shrink-0" aria-hidden="true"><circle cx="7" cy="7" r="5.500" fill="none" stroke="#555" strokeWidth="2" /></svg>
        <Combo id="1:3,782,596" value="1:3,782,596" className="ml-10 h-5 w-[90px] shrink-0" />
        <svg viewBox="0 0 14 18" className="ml-[6px] h-[18px] w-[14px] shrink-0" aria-hidden="true">
          <path d="M3.500 9V5.500a3.500 3.500 0 017 0V9" fill="none" stroke="#999" strokeWidth="2" />
          <rect x="1" y="8" width="12" height="9.500" rx="1" fill="#5e5e5e" />
        </svg>
        <label htmlFor="Magnifier" className="ml-[14px] pt-px">Magnifier</label>
        <Spin id="Magnifier" value="100%" className="ml-[3px] h-[22px] w-[77px] shrink-0" />
        <label htmlFor="Rotation" className="ml-[7px] pt-px">Rotation</label>
        <Spin id="Rotation" value="0.0" className="ml-[9px] h-[22px] w-[77px] shrink-0" />
        <span className="ml-[6px]"><Check label="Render" checked /></span>
        <button className="ml-[19px] flex shrink-0 items-center gap-[3px]">
          <svg viewBox="0 0 16 16" className="h-4 w-4" fill="none" aria-hidden="true">
            <circle cx="8" cy="8" r="6" stroke="#333" strokeWidth="2" />
            <ellipse cx="8" cy="8" rx="2.800" ry="6" stroke="#333" strokeWidth="1.300" />
            <path d="M0 8h16M8 0v16" stroke="#333" />
          </svg>
          <span className="pt-px">EPSG:3826 (OTF)</span>
        </button>
        <button aria-label="Messages" className="mr-[14px] ml-auto">
          <svg viewBox="0 0 17 15" className="h-[15px] w-[17px]" aria-hidden="true">
            <path d="M8 0c4.500 0 8 2.500 8 6 0 2-1.200 3.800-3 4.800L14.500 15 9 12H8c-4.500 0-8-2.500-8-6s3.500-6 8-6z" fill="#5e5e5e" />
            <path d="M4 5h2v2H4zM7 5h2v2H7zM10 5h2v2h-2z" fill="#fff" />
          </svg>
        </button>
      </footer>
    </div>
  );
}

/* ---------- taskbar ---------- */

function Task({ label, open, active, children }: Kids & { label: string; open?: boolean; active?: boolean }) {
  return (
    <button aria-label={label} className={`flex h-10 w-12 flex-col items-center ${active ? "bg-[#333]" : ""}`}>
      <span className="flex flex-1 items-center">{children}</span>
      <span className={`h-[2px] ${active ? "w-12" : "w-10"} ${open ? "bg-[#9ccc5a]" : ""}`} />
    </button>
  );
}

function Taskbar() {
  return (
    <footer className="relative flex h-10 shrink-0 items-center bg-black font-['Open_Sans','Noto_Sans',sans-serif] text-[12px] text-white">
      <div className="absolute top-0 right-0 left-[389px] h-[13px] bg-[#262626] pl-[14px] text-[#0b0b0b]">
        <p className="-mt-[6px] flex gap-[21px] leading-4"><span>33 items</span><span>1 item selected&nbsp; 983 bytes</span></p>
      </div>
      <div className="relative flex">
        <Task label="Start">
          <Svg className="h-4 w-4" box="0 0 16 16"><path d="M0 2.300L6.500 1.400v6.200H0zM7.300 1.300L16 0v7.600H7.300zM0 8.400h6.500v6.200L0 13.700zM7.300 8.400H16V16l-8.700-1.300z" fill="#fff" /></Svg>
        </Task>
        <Task label="Search">
          <Svg className="h-4 w-4" box="0 0 17 17"><circle cx="10.500" cy="6.500" r="5.300" stroke="#fff" strokeWidth="1.400" /><path d="M6.500 10.500L.800 16.200" stroke="#fff" strokeWidth="1.600" /></Svg>
        </Task>
        <Task label="Task view">
          <Svg className="h-4 w-5" box="0 0 20 16"><path d="M4.700 1.500h10.600v13H4.700zM3 3H.700v10H3M17 3h2.300v10H17" stroke="#fff" strokeWidth="1.300" /></Svg>
        </Task>
      </div>
      <div className="relative ml-[2px] flex gap-px">
        <Task label="File Explorer" open>
          <Svg className="h-[19px] w-[22px]" box="0 0 22 19">
            <path d="M0 1h8l2 2h12v15H0z" fill="#f5c84c" />
            <path d="M0 4h22v14H0z" fill="#fde08a" />
            <path d="M4 18.500V11l2-1.500h10l2 1.500v7.500h-4v-4.500H8v4.500z" fill="#27b5ee" />
          </Svg>
        </Task>
        <Task label="QGIS" open active><QgisLogo className="h-[22px] w-[18px]" /></Task>
        <Task label="Edge" open>
          <Svg className="h-[21px] w-5" box="0 0 20 21">
            <path d="M0 9.500C.800 3.500 5 0 10.500 0 16.500 0 20 4 20 9.500v2.700H6.700c.3 3 2.800 4.300 6 4.300 2.300 0 4.300-.6 6-1.600v4.300C16.800 20.400 14.500 21 11.800 21 6 21 2.300 17.600 2.300 12.500 2.300 9 4.500 6.300 7.500 5 4.500 5 1.800 6.500 0 9.500zM6.800 8.200h6.900c0-2.400-1.200-3.600-3.300-3.600-2 0-3.300 1.400-3.600 3.600z" fill="#0a7bdc" />
          </Svg>
        </Task>
        <Task label="Atom" open>
          <Svg>
            <circle cx="12" cy="12" r="12" fill="#2fb07f" />
            <circle cx="12" cy="9" r="8.500" fill="#5ec28f" opacity="0.500" />
            <g stroke="#fff" strokeWidth="0.900">
              <ellipse cx="12" cy="12" rx="8" ry="3.200" transform="rotate(10 12 12)" />
              <ellipse cx="12" cy="12" rx="8" ry="3.200" transform="rotate(70 12 12)" />
              <ellipse cx="12" cy="12" rx="8" ry="3.200" transform="rotate(130 12 12)" />
            </g>
            <circle cx="12" cy="12" r="1.300" fill="#fff" />
          </Svg>
        </Task>
      </div>
      <div className="relative ml-auto flex h-full items-center">
        <Svg className="h-[7px] w-3" box="0 0 12 7"><path d="M.7 6.300L6 1l5.300 5.300" stroke="#fff" strokeWidth="1.200" /></Svg>
        <Svg className="ml-[10px] h-3 w-4" box="0 0 16 12"><path d="M4.500 3.500h10v7h-10zM2 0v3M5 0v3M1 3h4v2L3.500 6.500V10" stroke="#fff" strokeWidth="1.100" /><path d="M6 5h7v4H6z" fill="#fff" /></Svg>
        <Svg className="ml-2 h-[14px] w-4" box="0 0 16 14"><path d="M5 2.500h10.500v7.500H4.500V7M10 10v3M6 13.300h8M.500.500h4v4h-4zM2.500 4.500V12" stroke="#fff" /></Svg>
        <Svg className="ml-2 h-[14px] w-4" box="0 0 16 14"><path d="M.7 5h2.500l3-3v10l-3-3H.700zM8.500 5q1.500 2 0 4M11 3.500q2.500 3.500 0 7M13.300 2q3.500 5 0 10" stroke="#fff" /></Svg>
        <Svg className="ml-2 h-[15px] w-4" box="0 0 16 15"><path d="M1 0h14v12h-5l-2 3-2-3H1z" fill="#fff" /><path d="M3.500 3.500h9M3.500 6h9M3.500 8.500h6" stroke="#000" strokeWidth="1.100" /></Svg>
        <span className="ml-[10px]">ENG</span>
        <time className="ml-4 flex w-[60px] flex-col items-center leading-[17px]">
          <span>11:13</span>
          <span>17/01/2018</span>
        </time>
        <span className="ml-[10px] h-full w-[4px] border-l border-[#777]" />
      </div>
    </footer>
  );
}

export default function App() {
  return (
    <div className="relative flex min-h-screen flex-col overflow-hidden font-['DejaVu_Sans_Condensed','DejaVu_Sans',sans-serif] text-[11px] leading-[14px] text-black">
      <MainWindow />
      <Taskbar />
      <Dialog />
    </div>
  );
}
